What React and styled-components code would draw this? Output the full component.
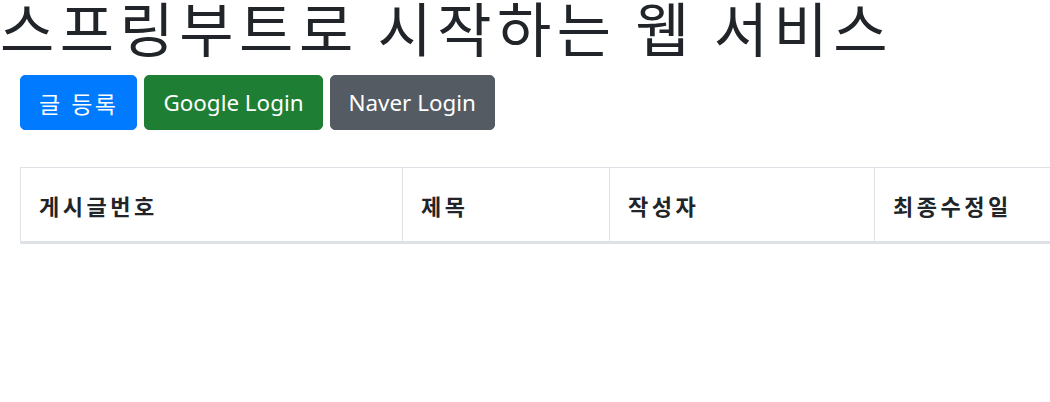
import styled, { createGlobalStyle } from 'styled-components'

const GlobalStyle = createGlobalStyle`
  html, body {
    margin: 0;
    background: #fff;
    color: #212529;
    font-family: "Noto Sans", "Noto Sans CJK KR", sans-serif;
    overflow: hidden;
  }
`

const Page = styled.div`
  width: 1050px;
`

const Title = styled.h1`
  margin: 0;
  height: 68px;
  font-family: "Noto Sans CJK KR", sans-serif;
  font-size: 59px;
  font-weight: 400;
  line-height: 53px;
  letter-spacing: 5.5px;
  white-space: nowrap;
`

const Content = styled.div`
  padding-left: 20px;
`

const ButtonRow = styled.div`
  display: flex;
  gap: 7px;
  margin-top: 7px;
`

const colors = {
  primary: '#007bff',
  success: '#1e7e34',
  secondary: '#545b62'
}

const Button = styled.button`
  height: 55px;
  padding: 0 18px;
  border: 1px solid ${(props) => colors[props.variant]};
  border-radius: 5px;
  background: ${(props) => colors[props.variant]};
  color: #fff;
  font-family: "Noto Sans", "Noto Sans CJK KR", sans-serif;
  font-size: ${(props) => (props.wide ? '23px' : '22.4px')};
  letter-spacing: ${(props) => (props.wide ? '2.5px' : '0')};
  cursor: pointer;
`

const Table = styled.table`
  margin-top: 37px;
  width: 100%;
  table-layout: fixed;
  border-collapse: collapse;
`

const HeadCell = styled.th`
  box-sizing: border-box;
  width: ${(props) => (props.w ? `${props.w}px` : 'auto')};
  height: 75px;
  padding: 0 18px;
  border: 1px solid #dee2e6;
  border-bottom: 3px solid #dee2e6;
  text-align: left;
  white-space: nowrap;
  font-family: "Noto Sans CJK KR", sans-serif;
  font-size: 22px;
  font-weight: 700;
  letter-spacing: 3.5px;
  color: #212529;

  &:last-child {
    border-right: 0;
  }
`

function App() {
  return (
    <Page>
      <GlobalStyle />
      <Title>스프링부트로 시작하는 웹 서비스</Title>
      <Content>
        <ButtonRow>
          <Button variant="primary" wide>글 등록</Button>
          <Button variant="success">Google Login</Button>
          <Button variant="secondary">Naver Login</Button>
        </ButtonRow>
        <Table>
          <thead>
            <tr>
              <HeadCell w={382}>게시글번호</HeadCell>
              <HeadCell w={207}>제목</HeadCell>
              <HeadCell w={265}>작성자</HeadCell>
              <HeadCell>최종수정일</HeadCell>
            </tr>
          </thead>
        </Table>
      </Content>
    </Page>
  )
}

export default App
